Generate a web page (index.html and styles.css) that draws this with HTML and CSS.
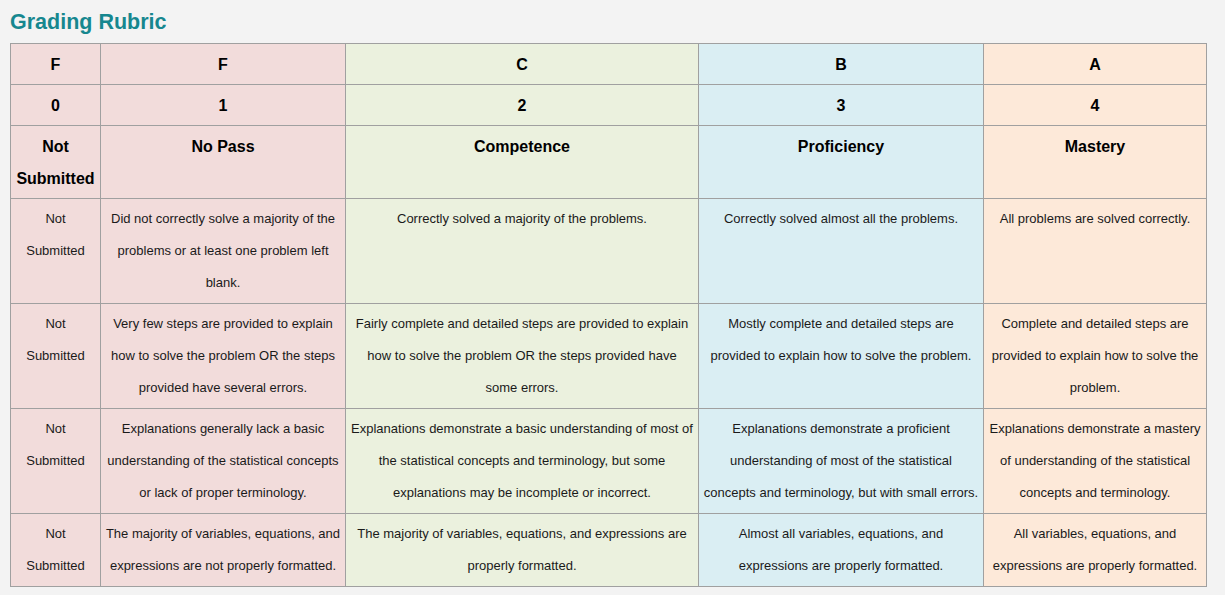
FILE: index.html
```html
<!DOCTYPE html>
<html>
<head>
<meta charset="utf-8">
<link rel="stylesheet" href="styles.css">
</head>
<body>
<h2 class="title">Grading Rubric</h2>
<table class="rubric">
  <colgroup>
    <col class="c0"><col class="c1"><col class="c2"><col class="c3"><col class="c4">
  </colgroup>
  <tr class="head">
    <th class="f">F</th><th class="f">F</th><th class="c">C</th><th class="b">B</th><th class="a">A</th>
  </tr>
  <tr class="head">
    <th class="f">0</th><th class="f">1</th><th class="c">2</th><th class="b">3</th><th class="a">4</th>
  </tr>
  <tr class="head">
    <th class="f">Not<br>Submitted</th><th class="f">No Pass</th><th class="c">Competence</th><th class="b">Proficiency</th><th class="a">Mastery</th>
  </tr>
  <tr>
    <td class="f">Not<br>Submitted</td>
    <td class="f">Did not correctly solve a majority of the<br>problems or at least one problem left<br>blank.</td>
    <td class="c">Correctly solved a majority of the problems.</td>
    <td class="b">Correctly solved almost all the problems.</td>
    <td class="a">All problems are solved correctly.</td>
  </tr>
  <tr>
    <td class="f">Not<br>Submitted</td>
    <td class="f">Very few steps are provided to explain<br>how to solve the problem OR the steps<br>provided have several errors.</td>
    <td class="c">Fairly complete and detailed steps are provided to explain<br>how to solve the problem OR the steps provided have<br>some errors.</td>
    <td class="b">Mostly complete and detailed steps are<br>provided to explain how to solve the problem.</td>
    <td class="a">Complete and detailed steps are<br>provided to explain how to solve the<br>problem.</td>
  </tr>
  <tr>
    <td class="f">Not<br>Submitted</td>
    <td class="f">Explanations generally lack a basic<br>understanding of the statistical concepts<br>or lack of proper terminology.</td>
    <td class="c">Explanations demonstrate a basic understanding of most of<br>the statistical concepts and terminology, but some<br>explanations may be incomplete or incorrect.</td>
    <td class="b">Explanations demonstrate a proficient<br>understanding of most of the statistical<br>concepts and terminology, but with small errors.</td>
    <td class="a">Explanations demonstrate a mastery<br>of understanding of the statistical<br>concepts and terminology.</td>
  </tr>
  <tr>
    <td class="f">Not<br>Submitted</td>
    <td class="f">The majority of variables, equations, and<br>expressions are not properly formatted.</td>
    <td class="c">The majority of variables, equations, and expressions are<br>properly formatted.</td>
    <td class="b">Almost all variables, equations, and<br>expressions are properly formatted.</td>
    <td class="a">All variables, equations, and<br>expressions are properly formatted.</td>
  </tr>
</table>
</body>
</html>
```
FILE: styles.css
```css
html, body {
  margin: 0;
  padding: 0;
  background: #f3f3f3;
}
body {
  padding: 0 10px;
  font-family: "Liberation Sans", Arial, sans-serif;
  color: #111;
}
.title {
  margin: 0 0 6px 0;
  padding-top: 7px;
  font-size: 21.5px;
  line-height: 30px;
  font-weight: bold;
  color: #16878f;
}
.rubric {
  border-collapse: collapse;
  table-layout: fixed;
  width: 1196px;
}
.c0 { width: 90px; }
.c1 { width: 245px; }
.c2 { width: 353px; }
.c3 { width: 285px; }
.c4 { width: 223px; }
.rubric th, .rubric td {
  border: 1px solid #a0a0a0;
  padding: 4px 2px;
  text-align: center;
  vertical-align: top;
  line-height: 32px;
}
.rubric th {
  padding-top: 5px;
  padding-bottom: 3px;
  font-size: 16px;
  font-weight: bold;
  color: #000;
}
.rubric td {
  font-size: 13px;
  color: #1a1a1a;
}
.f { background: #f2dcdb; }
.c { background: #ebf1de; }
.b { background: #daeef3; }
.a { background: #fde9d9; }
```
